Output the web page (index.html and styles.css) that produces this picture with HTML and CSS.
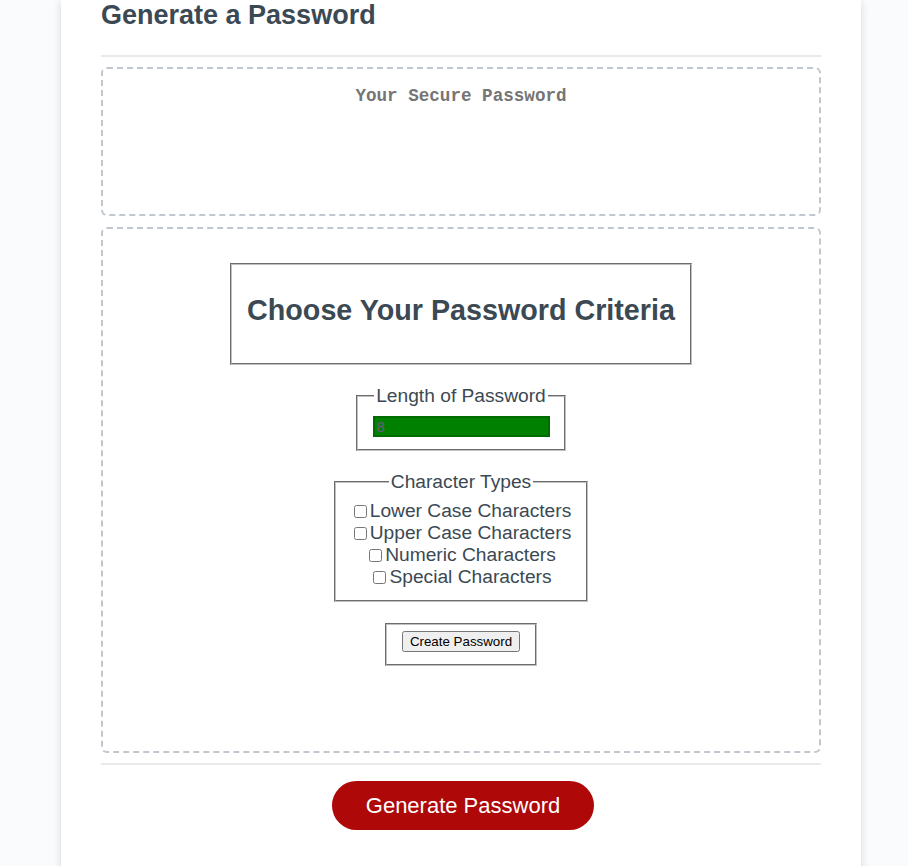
FILE: index.html
```html
<!DOCTYPE html>
<html lang="en">
<head>
<meta charset="utf-8">
<title>Password Generator</title>
<link rel="stylesheet" href="styles.css">
</head>
<body>
<div class="card">
  <div class="card-header">
    <h2 class="title">Generate a Password</h2>
  </div>
  <div class="card-body">
    <textarea readonly class="password" placeholder="Your Secure Password" aria-label="Generated Password"></textarea>
    <form class="criteria">
      <fieldset class="box heading-box">
        <h2 class="criteria-title">Choose Your Password Criteria</h2>
      </fieldset>
      <fieldset class="box length-box">
        <legend>Length of Password</legend>
        <input class="length" type="text" value="8">
      </fieldset>
      <fieldset class="box types">
        <legend>Character Types</legend>
        <label class="opt"><input type="checkbox">Lower Case Characters</label>
        <label class="opt"><input type="checkbox">Upper Case Characters</label>
        <label class="opt"><input type="checkbox">Numeric Characters</label>
        <label class="opt"><input type="checkbox">Special Characters</label>
      </fieldset>
      <fieldset class="box create-box">
        <button type="button" class="create">Create Password</button>
      </fieldset>
    </form>
  </div>
  <div class="card-footer">
    <button class="btn" type="button">Generate Password</button>
  </div>
</div>
</body>
</html>
```
FILE: styles.css
```css
* { box-sizing: border-box; }
html, body { margin: 0; padding: 0; }
body {
  background: #f9fbfd;
  font-family: "Liberation Sans", Arial, sans-serif;
}
.card {
  width: 800px;
  margin-left: 61px;
  background: #fff;
  box-shadow: rgba(0, 0, 0, 0.15) 0 2px 8px 0;
  color: rgb(59, 73, 84);
  font-size: 18px;
  padding: 0 40px 30px;
  border-radius: 0 0 5px 5px;
}
.title {
  margin: 0 0 25px;
  font-size: 27px;
  line-height: 30px;
  font-weight: bold;
}
.card-header::after {
  content: "";
  display: block;
  height: 2px;
  background: #e7e9eb;
}
.password {
  display: block;
  width: 100%;
  height: 149px;
  margin: 10px 0 11px;
  padding: 17px 15px 0;
  border: 2px dashed #c0c7cf;
  border-radius: 6px;
  resize: none;
  overflow: hidden;
  text-align: center;
  font-family: "Liberation Mono", monospace;
  font-size: 17.6px;
  font-weight: bold;
  line-height: 20px;
}
.password::placeholder { color: #757575; }
.criteria {
  border: 2px dashed #c0c7cf;
  border-radius: 6px;
  margin-bottom: 10px;
  padding: 34px 0 85px;
  display: flex;
  flex-direction: column;
  align-items: center;
  gap: 20px;
  font-size: 19.2px;
  color: rgb(59, 73, 84);
}
.box {
  margin: 0;
  width: fit-content;
  text-align: center;
  padding: 6.7px 14.4px 12px;
  border: 2px groove rgb(192, 192, 192);
}
.box legend {
  padding: 0 2px;
  line-height: 22px;
}
.heading-box {
  padding: 29px 15.5px 36px;
}
.criteria-title {
  margin: 0;
  font-size: 28.7px;
  line-height: 33px;
  font-weight: bold;
}
.length-box {
  padding-top: 9px;
}
.create-box {
  margin-top: 1px;
}
.length {
  display: block;
  width: 177px;
  height: 21px;
  background: #008000;
  border: 2px solid #006b00;
  color: #6a5a82;
  font-family: "Liberation Sans", Arial, sans-serif;
  font-size: 15px;
  padding: 0 2px;
}
.types .opt {
  display: block;
  line-height: 22px;
  white-space: nowrap;
}
.opt input {
  margin: 3px 3px 3px 3px;
  width: 13px;
  height: 13px;
  vertical-align: -1px;
}
.create {
  font-family: "Liberation Sans", Arial, sans-serif;
  font-size: 13.33px;
  padding: 1px 6px;
  display: block;
}
.card-footer {
  text-align: center;
}
.card-footer::before {
  content: "";
  display: block;
  height: 2px;
  background: #e7e9eb;
}
.btn {
  border: none;
  background: rgb(175, 8, 8);
  border-radius: 25px;
  color: #fff;
  display: inline-block;
  font-family: "Liberation Sans", Arial, sans-serif;
  font-size: 22px;
  line-height: 21px;
  margin: 16px 16px 16px 20px;
  padding: 14px 34px;
  cursor: pointer;
}
```
